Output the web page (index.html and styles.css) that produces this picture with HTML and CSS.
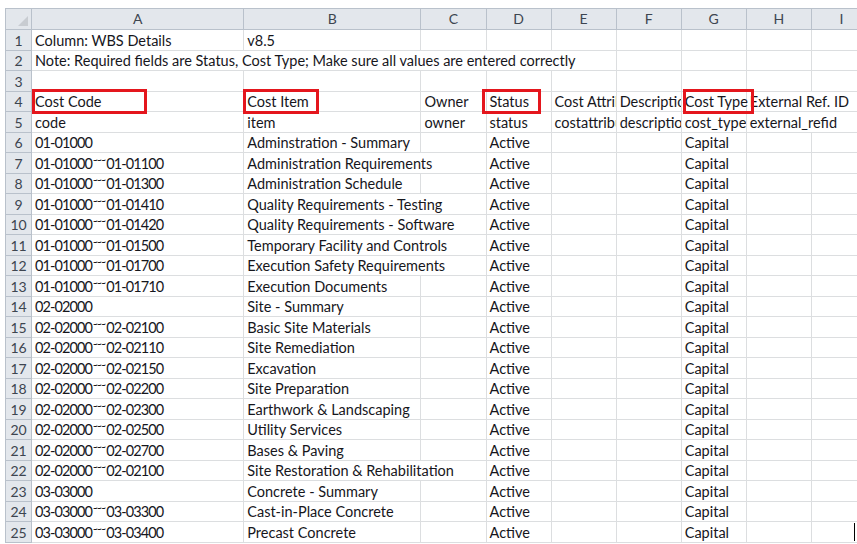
FILE: index.html
```html
<!DOCTYPE html>
<html>
<head>
<meta charset="utf-8">
<link rel="stylesheet" href="styles.css">
</head>
<body>
<div class="sheet">
<table class="grid">
<colgroup>
<col class="c-rh"><col class="c-a"><col class="c-b"><col class="c-n"><col class="c-n"><col class="c-n"><col class="c-n"><col class="c-n"><col class="c-n"><col class="c-i">
</colgroup>
<thead>
<tr class="hdr"><th class="corner"><span class="tri"></span></th><th>A</th><th>B</th><th>C</th><th>D</th><th>E</th><th>F</th><th>G</th><th>H</th><th>I</th></tr>
</thead>
<tbody>
<tr><td class="rh">1</td><td>Column: WBS Details</td><td>v8.5</td><td></td><td></td><td></td><td></td><td></td><td></td><td></td></tr>
<tr><td class="rh">2</td><td colspan="5">Note: Required fields are Status, Cost Type; Make sure all values are entered correctly</td><td></td><td></td><td></td><td></td></tr>
<tr><td class="rh">3</td><td></td><td></td><td></td><td></td><td></td><td></td><td></td><td></td><td></td></tr>
<tr><td class="rh">4</td><td class="mk">Cost Code<span class="box box-a"></span></td><td class="mk">Cost Item<span class="box box-b"></span></td><td>Owner</td><td class="mk">Status<span class="box box-d"></span></td><td class="clip">Cost Attribute</td><td class="clip">Description</td><td class="mk">Cost Type<span class="box box-g"></span></td><td colspan="2">External Ref. ID</td></tr>
<tr><td class="rh">5</td><td>code</td><td>item</td><td>owner</td><td>status</td><td class="clip">costattribute</td><td class="clip">description</td><td>cost_type</td><td colspan="2">external_refid</td></tr>
<tr><td class="rh">6</td><td class="code">01-01000</td><td>Adminstration - Summary</td><td></td><td>Active</td><td></td><td></td><td>Capital</td><td></td><td></td></tr>
<tr><td class="rh">7</td><td class="code">01-01000<span class="tl">~~~</span>01-01100</td><td colspan="2">Administration Requirements</td><td>Active</td><td></td><td></td><td>Capital</td><td></td><td></td></tr>
<tr><td class="rh">8</td><td class="code">01-01000<span class="tl">~~~</span>01-01300</td><td>Administration Schedule</td><td></td><td>Active</td><td></td><td></td><td>Capital</td><td></td><td></td></tr>
<tr><td class="rh">9</td><td class="code">01-01000<span class="tl">~~~</span>01-01410</td><td colspan="2">Quality Requirements - Testing</td><td>Active</td><td></td><td></td><td>Capital</td><td></td><td></td></tr>
<tr><td class="rh">10</td><td class="code">01-01000<span class="tl">~~~</span>01-01420</td><td colspan="2">Quality Requirements - Software</td><td>Active</td><td></td><td></td><td>Capital</td><td></td><td></td></tr>
<tr><td class="rh">11</td><td class="code">01-01000<span class="tl">~~~</span>01-01500</td><td colspan="2">Temporary Facility and Controls</td><td>Active</td><td></td><td></td><td>Capital</td><td></td><td></td></tr>
<tr><td class="rh">12</td><td class="code">01-01000<span class="tl">~~~</span>01-01700</td><td colspan="2">Execution Safety Requirements</td><td>Active</td><td></td><td></td><td>Capital</td><td></td><td></td></tr>
<tr><td class="rh">13</td><td class="code">01-01000<span class="tl">~~~</span>01-01710</td><td>Execution Documents</td><td></td><td>Active</td><td></td><td></td><td>Capital</td><td></td><td></td></tr>
<tr><td class="rh">14</td><td class="code">02-02000</td><td>Site - Summary</td><td></td><td>Active</td><td></td><td></td><td>Capital</td><td></td><td></td></tr>
<tr><td class="rh">15</td><td class="code">02-02000<span class="tl">~~~</span>02-02100</td><td>Basic Site Materials</td><td></td><td>Active</td><td></td><td></td><td>Capital</td><td></td><td></td></tr>
<tr><td class="rh">16</td><td class="code">02-02000<span class="tl">~~~</span>02-02110</td><td>Site Remediation</td><td></td><td>Active</td><td></td><td></td><td>Capital</td><td></td><td></td></tr>
<tr><td class="rh">17</td><td class="code">02-02000<span class="tl">~~~</span>02-02150</td><td>Excavation</td><td></td><td>Active</td><td></td><td></td><td>Capital</td><td></td><td></td></tr>
<tr><td class="rh">18</td><td class="code">02-02000<span class="tl">~~~</span>02-02200</td><td>Site Preparation</td><td></td><td>Active</td><td></td><td></td><td>Capital</td><td></td><td></td></tr>
<tr><td class="rh">19</td><td class="code">02-02000<span class="tl">~~~</span>02-02300</td><td>Earthwork &amp; Landscaping</td><td></td><td>Active</td><td></td><td></td><td>Capital</td><td></td><td></td></tr>
<tr><td class="rh">20</td><td class="code">02-02000<span class="tl">~~~</span>02-02500</td><td>Utility Services</td><td></td><td>Active</td><td></td><td></td><td>Capital</td><td></td><td></td></tr>
<tr><td class="rh">21</td><td class="code">02-02000<span class="tl">~~~</span>02-02700</td><td>Bases &amp; Paving</td><td></td><td>Active</td><td></td><td></td><td>Capital</td><td></td><td></td></tr>
<tr><td class="rh">22</td><td class="code">02-02000<span class="tl">~~~</span>02-02100</td><td colspan="2">Site Restoration &amp; Rehabilitation</td><td>Active</td><td></td><td></td><td>Capital</td><td></td><td></td></tr>
<tr><td class="rh">23</td><td class="code">03-03000</td><td>Concrete - Summary</td><td></td><td>Active</td><td></td><td></td><td>Capital</td><td></td><td></td></tr>
<tr><td class="rh">24</td><td class="code">03-03000<span class="tl">~~~</span>03-03300</td><td>Cast-in-Place Concrete</td><td></td><td>Active</td><td></td><td></td><td>Capital</td><td></td><td></td></tr>
<tr><td class="rh">25</td><td class="code">03-03000<span class="tl">~~~</span>03-03400</td><td>Precast Concrete</td><td></td><td>Active</td><td></td><td></td><td>Capital</td><td></td><td class="cursorcell"><span class="cursor"></span></td></tr>
</tbody>
</table>
</div>
</body>
</html>
```
FILE: styles.css
```css
html, body {
  margin: 0;
  padding: 0;
  background: #ffffff;
  overflow: hidden;
}
body {
  font-family: Lato, "Liberation Sans", sans-serif;
  color: #16161c;
}
.sheet {
  padding: 8px 0 0 5px;
}
.grid {
  border-collapse: collapse;
  table-layout: fixed;
  width: 867px;
}
.c-rh { width: 26px; }
.c-a { width: 212px; }
.c-b { width: 177px; }
.c-n { width: 65px; }
.c-i { width: 60px; }
.hdr {
  height: 21px;
}
.hdr th {
  background: #e3e7ec;
  border: 1px solid #b9c1cb;
  color: #3d4550;
  font-weight: normal;
  font-size: 14px;
  line-height: 18px;
  padding: 0;
  text-align: center;
  vertical-align: middle;
}
.corner {
  position: relative;
}
.tri {
  position: absolute;
  right: 3px;
  bottom: 3px;
  width: 0;
  height: 0;
  border-left: 10px solid transparent;
  border-bottom: 10px solid #c8ccd1;
}
tbody tr {
  height: 20.5px;
}
tbody td {
  border: 1px solid #dcdee0;
  padding: 0 3px 1px 3px;
  white-space: nowrap;
  overflow: hidden;
  font-size: 14.5px;
  line-height: 17px;
  vertical-align: bottom;
}
tbody td.code {
  letter-spacing: -0.9px;
}
tbody td.clip {
  padding-right: 0;
  text-overflow: clip;
}
tbody td.rh {
  background: #e3e7ec;
  border-color: #b9c1cb;
  color: #3d4550;
  text-align: center;
  padding: 0 0 1px 0;
  font-size: 14px;
}
.tl {
  font-size: 8px;
  font-weight: bold;
  letter-spacing: -0.6px;
  vertical-align: 6px;
  line-height: 1;
  padding-left: 1px;
  padding-right: 1px;
}
tbody td.mk {
  position: relative;
  overflow: visible;
}
.box {
  position: absolute;
  top: -3px;
  bottom: -3px;
  border: 3px solid #e4161d;
  z-index: 2;
  box-sizing: border-box;
}
.box-a { left: 0; width: 115px; }
.box-b { left: -1px; width: 76px; }
.box-d { left: -5px; width: 59px; }
.box-g { left: 1px; width: 71px; }
.cursorcell {
  position: relative;
}
.cursor {
  position: absolute;
  left: 42px;
  top: 1px;
  width: 1px;
  height: 18px;
  background: #000;
}
```
